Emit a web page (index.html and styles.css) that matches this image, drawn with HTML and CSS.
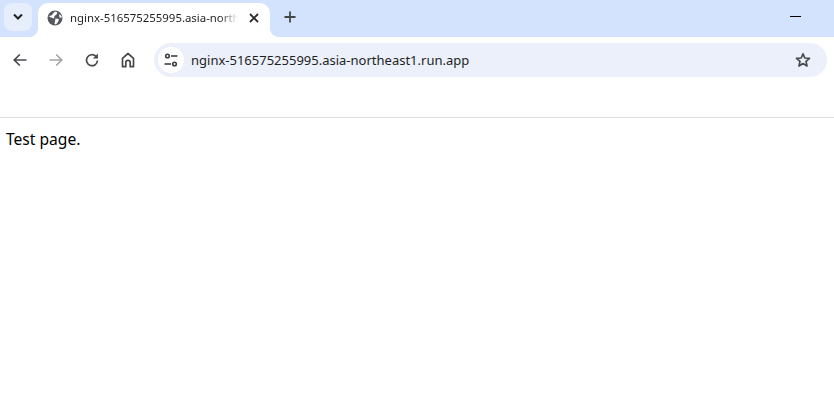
FILE: index.html
```html
<!DOCTYPE html>
<html lang="en">
<head>
<meta charset="utf-8">
<title>Test page</title>
<link rel="stylesheet" href="styles.css">
</head>
<body>
<div class="browser">
  <div class="tabstrip">
    <button class="tab-search" aria-label="Search tabs">
      <svg width="12" height="8" viewBox="0 0 12 8"><path d="M2 1.500 6 5.500 10 1.500" fill="none" stroke="#1f1f1f" stroke-width="2"/></svg>
    </button>
    <div class="tab">
      <svg class="favicon" width="16" height="16" viewBox="0 0 16 16">
        <circle cx="8" cy="8" r="7.500" fill="#55585c"/>
        <path d="M1.500 6 4.500 5.500 6.500 3 8 1.500 10.500 2.500 9.500 4.500 7.500 6 7 8.500 4 7.500Z M8.500 8.500 12 9 11 12 9 14.500 7.500 14 8 11Z M12 4 14.500 6 14.500 8 12.500 7.500Z" fill="#fff"/>
      </svg>
      <span class="tab-title">nginx-516575255995.asia-northeast1.run.app</span>
      <svg class="tab-close" width="10" height="10" viewBox="0 0 10 10"><path d="M1 1 9 9M9 1 1 9" stroke="#2b2b2b" stroke-width="1.800"/></svg>
    </div>
    <svg class="new-tab" width="12" height="12" viewBox="0 0 12 12"><path d="M6 .5V11.500M.5 6H11.500" stroke="#444746" stroke-width="1.800"/></svg>
    <div class="minimize"></div>
  </div>
  <div class="toolbar">
    <div class="nav">
      <svg class="nav-icon" width="16" height="16" viewBox="0 0 16 16"><path d="M14.500 8H2.500M7.800 2.500 2.300 8l5.500 5.500" fill="none" stroke="#474a4d" stroke-width="1.700"/></svg>
      <svg class="nav-icon" width="16" height="16" viewBox="0 0 16 16"><path d="M1.500 8H13.500M8.200 2.500 13.700 8l-5.500 5.500" fill="none" stroke="#a3a5a7" stroke-width="1.700"/></svg>
      <svg class="nav-icon" width="16" height="16" viewBox="0 0 16 16"><path d="M13.500 8.500A5.500 5.500 0 1 1 11.800 4.200L13.200 5.600" fill="none" stroke="#474a4d" stroke-width="1.700"/><path d="M13.900 1.600V6.600H8.900Z" fill="#474a4d"/></svg>
      <svg class="nav-icon" width="16" height="16" viewBox="0 0 16 16"><path d="M2.500 14.700V6.300L8 1.500 13.500 6.300V14.700H10.200V10.500A2.200 2.200 0 0 0 5.800 10.500V14.700Z" fill="none" stroke="#474a4d" stroke-width="1.700" stroke-linejoin="round"/></svg>
    </div>
    <div class="omnibox">
      <div class="site-info">
        <svg width="14" height="14" viewBox="0 0 14 14"><g fill="none" stroke="#3c3f42" stroke-width="1.600"><circle cx="3.500" cy="3" r="1.800"/><path d="M7 3H13.500"/><circle cx="10.500" cy="11" r="1.800"/><path d="M.5 11H7"/></g></svg>
      </div>
      <span class="url">nginx-516575255995.asia-northeast1.run.app</span>
      <svg class="star" width="16" height="16" viewBox="0 0 16 16"><path d="M8 1.800 9.800 6 14.500 6.400 11 9.400 12 14 8 11.600 4 14 5 9.400 1.500 6.400 6.200 6Z" fill="none" stroke="#474a4d" stroke-width="1.700" stroke-linejoin="round"/></svg>
    </div>
  </div>
  <div class="bookmarks"></div>
</div>
<main class="content">Test page.</main>
</body>
</html>
```
FILE: styles.css
```css
html, body {
  margin: 0;
  padding: 0;
  background: #fff;
  height: 100%;
  overflow: hidden;
}
body {
  font-family: "Noto Sans", sans-serif;
}
.tabstrip {
  height: 37px;
  background: #d3e3fd;
  display: flex;
  align-items: flex-start;
  position: relative;
}
.tab-search {
  width: 28px;
  height: 28px;
  margin: 3px 0 0 4px;
  padding: 0;
  border: 0;
  border-radius: 8px;
  background: #e6eefc;
  display: flex;
  align-items: center;
  justify-content: center;
}
.tab {
  width: 232px;
  height: 34px;
  margin: 3px 0 0 6px;
  padding: 0 11px 5px 9px;
  box-sizing: border-box;
  background: #fff;
  border-radius: 10px 10px 0 0;
  display: flex;
  align-items: center;
  position: relative;
}
.tab::before, .tab::after {
  content: "";
  position: absolute;
  bottom: 0;
  width: 8px;
  height: 8px;
}
.tab::before {
  left: -8px;
  background: radial-gradient(circle at 0 0, transparent 7.500px, #fff 8px);
}
.tab::after {
  right: -8px;
  background: radial-gradient(circle at 100% 0, transparent 7.500px, #fff 8px);
}
.favicon { flex: none; }
.tab-title {
  flex: 1;
  min-width: 0;
  margin-left: 7px;
  font: 11.400px/16px "Noto Sans", sans-serif;
  color: #1f1f1f;
  white-space: nowrap;
  overflow: hidden;
  -webkit-mask-image: linear-gradient(to right, #000 150px, transparent 168px);
  mask-image: linear-gradient(to right, #000 150px, transparent 168px);
}
.tab-close { flex: none; margin-left: 9px; }
.new-tab { margin: 11px 0 0 14px; flex: none; }
.minimize {
  width: 11px;
  height: 1px;
  background: #000;
  margin: 16px 33px 0 auto;
}
.toolbar {
  height: 46px;
  padding: 0 7px 0 12px;
  display: flex;
  align-items: center;
  background: #fff;
}
.nav {
  display: flex;
  gap: 20px;
  margin-right: 18px;
  flex: none;
}
.omnibox {
  flex: 1;
  height: 34px;
  padding: 0 16px 0 4px;
  border-radius: 17px;
  background: #ebf0fa;
  display: flex;
  align-items: center;
}
.nav-icon { flex: none; }
.site-info {
  width: 26px;
  height: 26px;
  border-radius: 50%;
  background: #fff;
  display: flex;
  align-items: center;
  justify-content: center;
  flex: none;
}
.url {
  flex: 1;
  margin-left: 7px;
  font: 13px/18px "Noto Sans", sans-serif;
  color: #1f1f1f;
  white-space: nowrap;
}
.star { flex: none; }
.bookmarks {
  height: 34px;
  background: #fff;
  border-bottom: 1px solid #dedede;
}
.content {
  padding: 10px 6px 0;
  font: 15.600px/22px "Noto Sans", sans-serif;
  color: #000;
}
```
